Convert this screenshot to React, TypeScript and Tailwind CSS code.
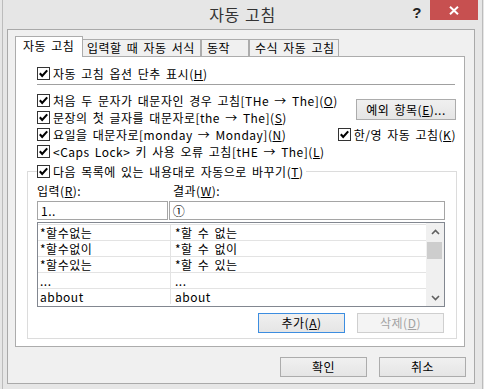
import React from "react";

function Check() {
  return (
    <svg width="13" height="13" viewBox="0 0 13 13" className="shrink-0 block">
      <rect x="0.5" y="0.5" width="12" height="12" fill="white" stroke="#333333" />
      <path d="M2.8 6.2 L5.2 9 L10.2 3.4" fill="none" stroke="#000" strokeWidth="2.1" />
    </svg>
  );
}

function CheckRow({ children, className = "" }: { children: React.ReactNode; className?: string }) {
  return (
    <div className={"flex items-center h-[17px] gap-[3px] whitespace-nowrap " + className}>
      <Check />
      <span className="leading-[17px]">{children}</span>
    </div>
  );
}

function ChevronUp() {
  return (
    <svg width="9" height="6" viewBox="0 0 9 6" className="block">
      <path d="M1 5 L4.5 1.5 L8 5" fill="none" stroke="#606060" strokeWidth="1.6" />
    </svg>
  );
}
function ChevronDown() {
  return (
    <svg width="9" height="6" viewBox="0 0 9 6" className="block">
      <path d="M1 1 L4.5 4.5 L8 1" fill="none" stroke="#606060" strokeWidth="1.6" />
    </svg>
  );
}

const rows: [string, string][] = [
  ["*할수없는", "*할 수 없는"],
  ["*할수없이", "*할 수 없이"],
  ["*할수있는", "*할 수 있는"],
  ["...", "..."],
  ["abbout", "about"],
];

export default function App() {
  return (
    <div className="w-[484px] h-[389px] bg-[#e6e6e6] pl-[2px] pr-[1px] font-['Noto_Sans_CJK_KR','Noto_Sans',sans-serif] text-[12px] tracking-[0.5px] [word-spacing:2px] text-black leading-none overflow-hidden">
      <div className="h-full border-l border-r border-[#bcbcbc] flex flex-col">
        {/* title bar */}
        <div className="h-[29px] flex shrink-0">
          <div className="w-[78px]" />
          <div className="flex-1 flex justify-center items-center text-[16px] tracking-[0.6px] [word-spacing:1px] text-[#333333] pb-[1px]">자동 고침</div>
          <div className="w-[78px] flex items-start justify-end pr-[4px]">
            <div className="w-[26px] h-[20px] flex items-center justify-center font-['Liberation_Sans',sans-serif] font-bold text-[15px] text-[#222222] pt-[4px]">?</div>
            <div className="w-[48px] h-[20px] bg-[#c75050] flex items-center justify-center">
              <svg width="10" height="9" viewBox="0 0 10 9" className="block">
                <path d="M1 0.8 L9 8.2 M9 0.8 L1 8.2" stroke="white" strokeWidth="2" />
              </svg>
            </div>
          </div>
        </div>

        {/* client area */}
        <div className="ml-[4px] w-[468px] h-[355px] border border-[#a9a9a9] bg-[#f0f0f0] pl-[7px] pr-[8px] pt-[6px] flex flex-col">
          {/* tabs */}
          <div className="flex items-end h-[21px] -mb-[1px] relative z-10 whitespace-nowrap">
            <div className="w-[68px] h-[21px] bg-white border border-b-0 border-[#acacac] pl-[7px] flex items-center pb-[2px]">자동 고침</div>
            <div className="w-[118px] h-[17px] mb-[1px] bg-[#f0f0f0] border border-l-0 border-b-0 border-[#acacac] pl-[4px] flex items-center">입력할 때 자동 서식</div>
            <div className="w-[48px] h-[17px] mb-[1px] bg-[#f0f0f0] border border-b-0 border-[#acacac] pl-[5px] flex items-center">동작</div>
            <div className="w-[90px] h-[17px] mb-[1px] bg-[#f0f0f0] border border-b-0 border-[#acacac] pl-[5px] flex items-center">수식 자동 고침</div>
          </div>

          {/* panel */}
          <div className="w-[450px] h-[291px] bg-white border border-[#acacac] pl-[11px] pr-[7px] pt-[8px] pb-[7px] flex flex-col">
            <CheckRow className="ml-[10px]">
              자동 고침 옵션 단추 표시(<u>H</u>)
            </CheckRow>
            <div className="ml-[10px] mr-[2px] mt-[2px] h-px bg-[#a0a0a0]" />

            <div className="flex mt-[7px] ml-[10px]">
              <div className="flex-1 flex flex-col">
                <CheckRow>
                  처음 두 문자가 대문자인 경우 고침[THe → The](<u>O</u>)
                </CheckRow>
                <CheckRow>
                  문장의 첫 글자를 대문자로[the → The](<u>S</u>)
                </CheckRow>
                <CheckRow>
                  요일을 대문자로[monday → Monday](<u>N</u>)
                </CheckRow>
                <CheckRow>
                  {"<Caps Lock>"} 키 사용 오류 고침[tHE → The](<u>L</u>)
                </CheckRow>
              </div>
              <div className="w-[123px] flex flex-col">
                <div className="self-end mr-[1px] mt-[7px] w-[100px] h-[21px] border border-[#acacac] bg-[linear-gradient(#f0f0f0,#e5e5e5)] flex items-center justify-center whitespace-nowrap">
                  예외 항목(<u>E</u>)...
                </div>
                <CheckRow className="mt-[6px]">
                  한/영 자동 고침(<u>K</u>)
                </CheckRow>
              </div>
            </div>

            <fieldset className="mt-[3px] border border-[#dcdcdc] pl-[9px] pr-[11px] pb-[5px] min-w-0">
              <legend className="pr-[3px]">
                <span className="flex items-center h-[17px] gap-[3px] whitespace-nowrap">
                  <Check />
                  <span className="leading-[17px]">
                    다음 목록에 있는 내용대로 자동으로 바꾸기(<u>T</u>)
                  </span>
                </span>
              </legend>

              <div className="flex h-[16px] mt-[3px] items-center whitespace-nowrap">
                <div className="w-[136px]">
                  입력(<u>R</u>):
                </div>
                <div>
                  결과(<u>W</u>):
                </div>
              </div>

              <div className="flex gap-[1px] mt-[2px]">
                <div className="w-[131px] h-[19px] border border-[#a5a5a5] bg-white pl-[3px] flex items-center">1..</div>
                <div className="w-[277px] h-[19px] border border-[#a5a5a5] bg-white pl-[3px] flex items-center">①</div>
              </div>

              <div className="mt-[2px] w-[408px] h-[85px] border border-[#828790] bg-white flex">
                <div className="flex-1 pt-[1px]">
                  {rows.map(([a, b], i) => (
                    <div key={i} className="flex h-[16px] border-t border-[#e3e3e3]">
                      <div className="w-[132px] pl-[2px] flex items-center whitespace-nowrap">{a}</div>
                      <div className="flex-1 border-l border-[#e3e3e3] pl-[4px] flex items-center whitespace-nowrap">{b}</div>
                    </div>
                  ))}
                </div>
                <div className="w-[18px] bg-[#f0f0f0] flex flex-col">
                  <div className="h-[17px] flex items-center justify-center">
                    <ChevronUp />
                  </div>
                  <div className="mt-[2px] ml-[1px] w-[15px] h-[17px] bg-[#cdcdcd]" />
                  <div className="flex-1" />
                  <div className="h-[17px] flex items-center justify-center">
                    <ChevronDown />
                  </div>
                </div>
              </div>

              <div className="mt-[6px] flex justify-end gap-[12px] pr-[1px] whitespace-nowrap">
                <div className="w-[87px] h-[20px] border border-[#3c8de0] bg-[linear-gradient(#f0f0f0,#e5e5e5)] flex items-center justify-center">
                  추가(<u>A</u>)
                </div>
                <div className="w-[87px] h-[20px] border border-[#cfcfcf] bg-[#f4f4f4] text-[#a3a3a3] flex items-center justify-center">
                  삭제(<u>D</u>)
                </div>
              </div>
            </fieldset>
          </div>

          {/* bottom buttons */}
          <div className="mt-[10px] flex justify-end gap-[12px] whitespace-nowrap">
            <div className="w-[87px] h-[20px] border border-[#acacac] bg-[linear-gradient(#f0f0f0,#e5e5e5)] flex items-center justify-center">확인</div>
            <div className="w-[87px] h-[20px] border border-[#acacac] bg-[linear-gradient(#f0f0f0,#e5e5e5)] flex items-center justify-center">취소</div>
          </div>
        </div>
      </div>
    </div>
  );
}
